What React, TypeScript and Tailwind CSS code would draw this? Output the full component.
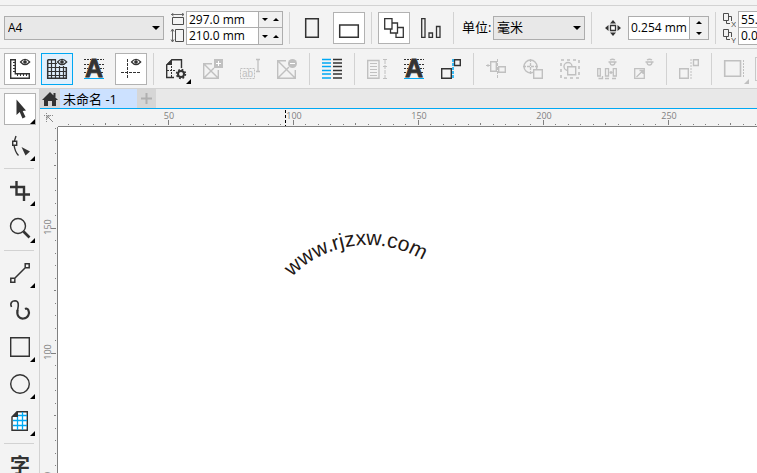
import React from 'react';

const DARK = '#333333';
const DIM = '#c0c0c0';
const BLUE = '#00a8f3';

type IconProps = { children: React.ReactNode; color?: string };

function Icon({ children, color = DARK }: IconProps) {
  return (
    <svg width="20" height="20" viewBox="0 0 20 20" fill="none" stroke={color} className="shrink-0 overflow-visible" aria-hidden="true">
      {children}
    </svg>
  );
}

function Eye({ color = DARK }: { color?: string }) {
  return (
    <g stroke={color}>
      <path d="M10.5 3Q15 -2.4 19.7 3Q15 8.2 10.5 3Z" strokeWidth="1.2" />
      <circle cx="15" cy="3" r="1.3" fill={color} />
    </g>
  );
}

function BaselineA() {
  return (
    <Icon>
      <path d="M0 .5H7M13 .5H20M0 5.500H5M15 5.500H20M0 9.500H4M16 9.500H20M0 13.500H3M17 13.500H20" strokeDasharray="2 1" />
      <text x="10" y="18" textAnchor="middle" fontSize="25" fontWeight="700" fontFamily="Liberation Sans, Arial, sans-serif" fill={DARK} stroke={DARK} strokeWidth=".8">A</text>
      <path d="M0 19.500H20" stroke={BLUE} />
    </Icon>
  );
}

function Flyout({ color = '#000000' }: { color?: string }) {
  return (
    <svg width="5" height="5" viewBox="0 0 5 5" className="absolute bottom-0 right-0" aria-hidden="true">
      <path d="M5 0V5H0Z" fill={color} />
    </svg>
  );
}

type ToolProps = {
  label: string;
  children: React.ReactNode;
  look?: 'plain' | 'boxed' | 'active';
  flyout?: boolean;
  disabled?: boolean;
};

const looks = {
  plain: 'border-transparent',
  boxed: 'border-[#b2b2b2] bg-white',
  active: 'border-[#00a8f3] bg-[#e1f0fd]',
};

function Tool({ label, children, look = 'plain', flyout, disabled }: ToolProps) {
  return (
    <button type="button" aria-label={label} title={label} disabled={disabled}
      className={`relative flex h-8 w-8 shrink-0 items-center justify-center border ${looks[look]}`}>
      {children}
      {flyout && <Flyout color={disabled ? DIM : '#000000'} />}
    </button>
  );
}

function Divider() {
  return (
    <div className="flex h-8 w-[3px] shrink-0 justify-center">
      <div className="w-px bg-[#d2d2d2]" />
    </div>
  );
}

function ToolDivider() {
  return (
    <div className="flex h-[3px] w-[30px] shrink-0 flex-col justify-center">
      <div className="h-px bg-[#d2d2d2]" />
    </div>
  );
}

function Arrow({ up = false, wide = false }: { up?: boolean; wide?: boolean }) {
  return (
    <svg width={wide ? 8 : 6} height={wide ? 4 : 3} viewBox="0 0 8 4" className="shrink-0" aria-hidden="true">
      <path d={up ? 'M0 4L4 0L8 4Z' : 'M0 0L4 4L8 0Z'} fill="#000000" />
    </svg>
  );
}

function Select({ label, value, className }: { label: string; value: string; className: string }) {
  return (
    <div className={`relative h-6 shrink-0 ${className}`}>
      <select aria-label={label} defaultValue={value} className="h-full w-full appearance-none border border-[#adadad] bg-[#e8e8e8] px-[3px] outline-none">
        <option>{value}</option>
      </select>
      <span className="pointer-events-none absolute inset-y-0 right-1 flex items-center"><Arrow wide /></span>
    </div>
  );
}

function SizeRow({ label, value }: { label: string; value: string }) {
  return (
    <div className="flex h-4">
      <input aria-label={label} defaultValue={value} className="w-[71px] bg-white pl-0.5 outline-none" />
      <div className="flex w-6 items-center justify-around border-l border-[#adadad] bg-[#f0f0f0]">
        <button type="button" aria-label={`${label} down`}><Arrow /></button>
        <button type="button" aria-label={`${label} up`}><Arrow up /></button>
      </div>
    </div>
  );
}

function PropertyBar() {
  return (
    <div className="flex h-11 shrink-0 items-center gap-[5px] overflow-hidden border-y border-[#d2d2d2] pl-1 pt-0.5">
      <Select label="Page size" value="A4" className="w-40" />
      <div className="flex shrink-0 items-center gap-px">
        <svg width="16" height="30" viewBox="0 0 16 30" fill="none" stroke="#4d4d4d" className="shrink-0" aria-hidden="true">
          <path d="M3.5 4.5H14.5V11.5H3.5Z" />
          <path d="M2 1.5H15M4.500 0L2.500 1.500L4.500 3M13 0L15 1.500L13 3" stroke="#666666" />
          <path d="M6.500 16.500H14.500V28.500H6.500Z" />
          <path d="M3.500 16V29M2 18.500L3.500 16L5 18.500M2 26.500L3.500 29L5 26.500" stroke="#666666" />
        </svg>
        <div className="w-[97px] divide-y divide-[#adadad] border border-[#adadad]">
          <SizeRow label="Page width" value="297.0 mm" />
          <SizeRow label="Page height" value="210.0 mm" />
        </div>
      </div>
      <Divider />
      <Tool label="Portrait">
        <Icon><path d="M3.700.7H16.300V19.300H3.700Z" strokeWidth="1.500" /></Icon>
      </Tool>
      <Tool label="Landscape" look="boxed">
        <Icon><path d="M.7 7H19.300V19.300H.7Z" strokeWidth="1.500" /></Icon>
      </Tool>
      <Divider />
      <Tool label="All pages" look="boxed">
        <Icon>
          <g fill="#ffffff" strokeWidth="1.3">
            <path d="M12 9.500H19.300V19.300H12Z" />
            <path d="M6.500 5H13.500V15H6.500Z" />
            <path d="M.7.700H8V11H.7Z" />
          </g>
        </Icon>
      </Tool>
      <Tool label="Current page">
        <Icon><path d="M.7.700H4V19.300H.7ZM8 15H11.500V19.300H8ZM15.500 8.500H19V19.300H15.500Z" strokeWidth="1.3" /></Icon>
      </Tool>
      <Divider />
      <div className="flex shrink-0 items-center">
        <span className="w-[33px] whitespace-nowrap pl-0.5 text-[13px]">单位:</span>
        <Select label="单位" value="毫米" className="w-[92px] text-[13px]" />
      </div>
      <Divider />
      <div className="flex shrink-0 items-center">
        <div className="flex w-[30px] justify-center">
          <svg width="16" height="16" viewBox="0 0 16 16" aria-hidden="true">
            <path d="M5.500 5.500H10.500V10.500H5.500Z" fill="#ffffff" stroke={DARK} strokeWidth="1.300" />
            <path d="M8 0L11 3.500H5ZM8 16L5 12.500H11ZM0 8L3.500 5V11ZM16 8L12.500 11V5Z" fill={DARK} />
          </svg>
        </div>
        <div className="flex h-6 w-[81px] border border-[#adadad]">
          <input aria-label="Nudge distance" defaultValue="0.254 mm" className="min-w-0 flex-1 bg-white pl-0.5 outline-none" />
          <div className="flex w-[19px] flex-col items-center justify-around border-l border-[#adadad] bg-[#f0f0f0]">
            <button type="button" aria-label="Nudge up" className="flex"><Arrow up /></button>
            <button type="button" aria-label="Nudge down" className="flex"><Arrow /></button>
          </div>
        </div>
      </div>
      <Divider />
      <div className="flex shrink-0 items-center gap-0.5">
        <svg width="14" height="32" viewBox="0 0 14 32" fill="none" stroke="#4d4d4d" aria-hidden="true">
          <path d="M1.500 1.500H6.500V8.500H1.500ZM6.500 4.500H9.500V9M4.500 8.500V11.500H8" />
          <path d="M1.500 17.500H6.500V24.500H1.500ZM6.500 20.500H9.500V25M4.500 24.500V27.500H8" />
          <g fill="#4d4d4d" stroke="none" fontSize="8" fontFamily="Liberation Sans, Arial, sans-serif">
            <text x="9" y="15">X</text>
            <text x="9" y="31">Y</text>
          </g>
        </svg>
        <div className="w-[97px] divide-y divide-[#adadad] border border-[#adadad]">
          <SizeRow label="Duplicate X" value="55.0 mm" />
          <SizeRow label="Duplicate Y" value="0.0 mm" />
        </div>
      </div>
    </div>
  );
}

function StandardBar() {
  return (
    <div className="flex h-10 shrink-0 items-center gap-[5px] overflow-hidden border-b border-[#d2d2d2] pl-1 pt-px">
      <Tool label="Rulers" look="boxed">
        <Icon>
          <path d="M.7.700H5.300V14.700H19.300V19.300H.7Z" strokeWidth="1.4" />
          <path d="M3 3.500H5M3 6.500H5M3 9.500H5M3 12.500H5M7.500 15V17M10.500 15V17M13.500 15V17M16.500 15V17" />
          <Eye />
        </Icon>
      </Tool>
      <Tool label="Grid" look="active">
        <Icon>
          <path d="M.7.700V19.300H19.300V8M.7.700H9" strokeWidth="1.5" />
          <path d="M4.500 0V20M8.500 0V20M12.500 7V20M16.500 7V20M0 4.500H10M0 8.500H20M0 12.500H20M0 16.500H20" strokeWidth="1.200" />
          <Eye />
        </Icon>
      </Tool>
      <Tool label="Baseline grid"><BaselineA /></Tool>
      <Tool label="Guidelines" look="boxed">
        <Icon>
          <path d="M6.500 0V20M0 13.500H20" strokeDasharray="3 1" />
          <Eye />
        </Icon>
      </Tool>
      <Divider />
      <Tool label="Page setup" flyout>
        <Icon>
          <path d="M15.500 9V.7H6L.7 6V18.500H8" strokeWidth="1.400" />
          <path d="M6 0V6H0Z" fill={DARK} stroke="none" />
          <path d="M5.500 7V18M1 11.500H10" strokeDasharray="2 1" />
          <circle cx="15" cy="15" r="3" strokeWidth="2" />
          <circle cx="15" cy="15" r="4.400" strokeWidth="1.600" strokeDasharray="1.730 1.730" />
        </Icon>
      </Tool>
      <Tool label="Insert frame" disabled>
        <Icon color={DIM}>
          <path d="M9 4.700H.7V19.300H15.300V11M.7 4.700L15.300 19.300M.7 19.300L11 9" strokeWidth="1.400" />
          <path d="M11 0H20V9H11Z" fill={DIM} stroke="none" />
          <path d="M15.500 2V7M13 4.500H18" stroke="#ffffff" />
        </Icon>
      </Tool>
      <Tool label="Fit text" disabled>
        <Icon color={DIM}>
          <path d="M.5 9.500H14.500V19.500H.5Z" strokeDasharray="2 1" />
          <text x="2" y="18" fontSize="10" fontFamily="Liberation Sans, Arial, sans-serif" fill={DIM} stroke="none">ab</text>
          <path d="M18 .7V12M16 .5H20M16 12.500H20" strokeWidth="1.300" />
        </Icon>
      </Tool>
      <Tool label="Remove frame" disabled>
        <Icon color={DIM}>
          <path d="M9 1.700H.7V19.300H18.300V11M.7 1.700L18.300 19.300M.7 19.300L12 8" strokeWidth="1.400" />
          <circle cx="15.500" cy="4.500" r="4.500" fill={DIM} stroke="none" />
          <path d="M13 4.500H18" stroke="#ffffff" />
        </Icon>
      </Tool>
      <Divider />
      <Tool label="Columns">
        <Icon>
          <path d="M0 .5H9M0 4H9M0 7.500H9M0 11.500H9M0 15H9M0 19H9" stroke={BLUE} strokeWidth="1.600" />
          <path d="M11 .5H20M11 4H20M11 7.500H20M11 11.500H20M11 15H20M11 19H20" strokeWidth="1.600" />
        </Icon>
      </Tool>
      <Divider />
      <Tool label="Column text" disabled>
        <Icon color={DIM}>
          <path d="M.7 1.500H12V19.300H.7Z" strokeWidth="1.400" />
          <path d="M3 4.500H10M3 7.500H10M3 10.500H10M3 13.500H10M3 16.500H10" />
          <path d="M18 1V20" strokeDasharray="4 1" />
          <path d="M16 .5H20M16 7.500H20M16 19.500H20" />
        </Icon>
      </Tool>
      <Tool label="Align to baseline"><BaselineA /></Tool>
      <Tool label="Snap to objects">
        <Icon>
          <path d="M.7 9.700H10.300V19.300H.7ZM13.500.7H19.300V6.500H13.500Z" strokeWidth="1.400" />
          <path d="M12 0V20" stroke={BLUE} strokeWidth="1.500" strokeDasharray="3 1" />
        </Icon>
      </Tool>
      <Divider />
      <Tool label="Align centers" disabled>
        <Icon color={DIM}>
          <path d="M4.700 2.700H10.300V12.300H4.700ZM12.700 7.700H19.300V13.300H12.700Z" strokeWidth="1.400" />
          <path d="M11.500 0V20" strokeDasharray="3 1" />
          <path d="M0 6.500H4M2 5V8" />
        </Icon>
      </Tool>
      <Tool label="Center snap" disabled>
        <Icon color={DIM}>
          <circle cx="7.500" cy="7.500" r="6.500" strokeWidth="1.400" />
          <path d="M7.500 0V15M0 7.500H15" strokeWidth="1.300" strokeDasharray="3 1" />
          <path d="M10.700 10.700H19.300V19.300H10.700Z" strokeWidth="1.400" fill="#f3f3f3" />
        </Icon>
      </Tool>
      <Tool label="Group snap" disabled>
        <Icon color={DIM}>
          <path d="M1 1H19V19H1Z" strokeWidth="1.600" strokeDasharray="3 3" />
          <circle cx="8" cy="7.500" r="4" strokeWidth="1.400" />
          <path d="M7.700 7.700H15.700V15.700H7.700Z" strokeWidth="1.400" fill="#f3f3f3" />
        </Icon>
      </Tool>
      <Tool label="Spacing" disabled>
        <Icon color={DIM}>
          <path d="M.7 9.700H3.300V17H.7ZM8.500 9.700H11.500V17H8.500ZM16.300 9.700H19.300V17H16.300ZM12.500 13.500H15.500M14 12V15M1.500 19.500H5.500V17M8 19.500H12M15 19.500H19" strokeWidth="1.300" />
          <path d="M11.500 3H19.500M13 1Q15.500 -.5 18 1M13 3Q13 6 15.500 6Q18 6 18 3" strokeWidth="1.300" />
        </Icon>
      </Tool>
      <Tool label="Scale" disabled>
        <Icon color={DIM}>
          <path d="M.7 9.700H10.300V19.300H.7ZM2.500 18L9 11.500M5.500 11.500H9V15" strokeWidth="1.300" />
          <path d="M11.500 3H19.500M13 1Q15.500 -.5 18 1M13 3Q13 6 15.500 6Q18 6 18 3" strokeWidth="1.300" />
        </Icon>
      </Tool>
      <Divider />
      <Tool label="Edge snap" disabled>
        <Icon color={DIM}>
          <path d="M.7 9.700H9.300V19.300H.7ZM14.500.7H19.300V6.500H14.500Z" strokeWidth="1.400" />
          <path d="M12 0V20" strokeDasharray="2 1" />
        </Icon>
      </Tool>
      <Divider />
      <Tool label="Page edge" flyout disabled>
        <Icon color={DIM}>
          <path d="M.7 1.700H16.500V17.300H.7Z" strokeWidth="1.600" />
          <path d="M19.500 1V19" strokeDasharray="2 1" />
        </Icon>
      </Tool>
      <div className="h-6 w-8 shrink-0 border border-[#c8c8c8]" />
    </div>
  );
}

function Toolbox() {
  return (
    <nav aria-label="Toolbox" className="flex w-10 shrink-0 flex-col gap-[5px] overflow-hidden border-r border-[#d2d2d2] px-1 pt-1">
      <Tool label="Pick" look="boxed" flyout>
        <Icon><path d="M6.500.5V16L9.700 13L12.500 19.500L15.500 18L12.700 12L16 11.500Z" fill={DARK} stroke="none" /></Icon>
      </Tool>
      <Tool label="Shape" flyout>
        <Icon>
          <path d="M6 0Q4 5 4 9Q5 16 8.500 19.500" strokeWidth="1.400" />
          <path d="M2.700 5.200H6.700V9.200H2.700Z" fill="#f3f3f3" strokeWidth="1.400" />
          <path d="M11.500 11L20 15.500L15.500 19.500Z" fill={DARK} stroke="none" />
        </Icon>
      </Tool>
      <ToolDivider />
      <Tool label="Crop" flyout>
        <Icon><path d="M0 6H14V20M6.500 0V13.500H20" strokeWidth="2.400" /></Icon>
      </Tool>
      <Tool label="Zoom" flyout>
        <Icon>
          <circle cx="8" cy="8" r="7.500" strokeWidth="1.400" />
          <path d="M13.500 13.500L19.500 19.500" strokeWidth="2.600" />
        </Icon>
      </Tool>
      <ToolDivider />
      <Tool label="Freehand" flyout>
        <Icon><path d="M4 16L16 4M.8 15.200H4.800V19.200H.8ZM15.200.8H19.200V4.800H15.200Z" strokeWidth="1.500" /></Icon>
      </Tool>
      <Tool label="Artistic media">
        <Icon>
          <path d="M1.500 7C-.5 3 2.500 .7 5 .7C10 1 8 7 7.500 11" strokeWidth="1.600" />
          <path d="M7.500 10C6.500 16 9.500 19 13.500 18.500C18 18 20 13.500 18.500 10.500C17.700 8.500 16 8.500 15 9" strokeWidth="2.200" />
        </Icon>
      </Tool>
      <Tool label="Rectangle" flyout>
        <Icon><path d="M.7.700H19.300V19.300H.7Z" strokeWidth="1.400" /></Icon>
      </Tool>
      <Tool label="Ellipse" flyout>
        <Icon><circle cx="10" cy="10" r="9.300" strokeWidth="1.400" /></Icon>
      </Tool>
      <Tool label="Graph paper" flyout>
        <Icon>
          <path d="M7 .7H17.300V19.300H2V6Z" fill="#ffffff" strokeWidth="1.400" />
          <path d="M7.500 6V19M12.500 1V19M8 4.500H17M3 9.500H17M3 14.500H17" stroke={BLUE} strokeWidth="1.300" />
          <path d="M8 0V6H1.500Z" fill={DARK} stroke="none" />
        </Icon>
      </Tool>
      <ToolDivider />
      <Tool label="Text">
        <span className="text-[20px] font-bold leading-5 text-[#333333]">字</span>
      </Tool>
    </nav>
  );
}

function Tabs() {
  return (
    <div className="flex h-5 shrink-0 items-stretch border-b border-[#00a8f3] bg-[#e8e8e8]">
      <button type="button" aria-label="Home" className="flex w-5 items-center justify-center bg-[#d6d6d6]">
        <svg width="16" height="14" viewBox="0 0 16 14" className="shrink-0" aria-hidden="true">
          <path d="M8 0L16 8H14V14H10V9H6V14H2V8H0ZM11.500 1H13.500V5H11.500Z" fill={DARK} />
        </svg>
      </button>
      <button type="button" className="w-[77px] whitespace-nowrap bg-[#cce1ff] pl-[3px] text-left text-[13px] leading-[18px]">未命名 -1</button>
      <button type="button" aria-label="New document" className="flex w-[19px] items-center justify-center bg-[#d6d6d6]">
        <svg width="11" height="11" viewBox="0 0 11 11" aria-hidden="true">
          <path d="M5.500 0V11M0 5.500H11" stroke="#b0b0b0" strokeWidth="2" />
        </svg>
      </button>
    </div>
  );
}

// 12.5px for every 5 mm, ticks grow at each 25 and 50 mm
const rulerWidth = window.innerWidth - 58;
const ticks = Array.from({ length: Math.ceil(rulerWidth / 12.5) + 1 }, (_, i) => i + 2);

function tickLength(i: number) {
  if (i % 10 === 0) return 5;
  return i % 5 === 0 ? 2 : 1;
}

function HorizontalRuler() {
  const labels = ticks.filter((i) => i % 10 === 0 && i * 12.5 < rulerWidth);
  return (
    <svg height="18" className="min-w-0 flex-1" aria-label="Horizontal ruler">
      {ticks.map((i) => (
        <rect key={i} x={Math.floor(i * 12.5 - 15)} y={16 - tickLength(i)} width="1" height={tickLength(i)} fill="#808080" />
      ))}
      <g fontSize="9" fill="#808080" textAnchor="middle">
        {labels.map((i) => (
          <text key={i} x={i * 12.5 - 14} y="10">{i * 5}</text>
        ))}
      </g>
      <path d="M227.500 1V17" stroke="#000000" strokeDasharray="3 2" />
      <path d="M0 17.500H4000" stroke="#808080" />
    </svg>
  );
}

const sideTicks = Array.from({ length: 100 }, (_, i) => i);

function VerticalRuler() {
  return (
    <svg width="18" className="h-full shrink-0" aria-label="Vertical ruler">
      {sideTicks.map((i) => (
        <rect key={i} x={16 - tickLength(i + 2)} y={Math.floor(i * 12.5 + 1)} width={tickLength(i + 2)} height="1" fill="#808080" />
      ))}
      <g fontSize="9" fill="#808080" textAnchor="middle">
        {[150, 100, 50].map((mm, n) => (
          <text key={mm} transform={`translate(11 ${100 + n * 125}) rotate(-90)`}>{mm}</text>
        ))}
      </g>
      <path d="M17.500 0V4000" stroke="#808080" />
    </svg>
  );
}

function Canvas() {
  return (
    <svg className="h-full min-w-0 flex-1 bg-white" aria-label="Drawing page">
      <defs>
        <path id="curve" d="M203 225A107 107 0 0 1 417 225" />
      </defs>
      <text fontSize="21" fontFamily="Liberation Sans, Arial, sans-serif" fill="#231815" textAnchor="middle">
        <textPath href="#curve" startOffset="46%">www.rjzxw.com</textPath>
      </text>
    </svg>
  );
}

export default function App() {
  return (
    <div className="flex h-screen flex-col overflow-hidden bg-[#f3f3f3] font-['Open_Sans','Noto_Sans_CJK_SC',sans-serif] text-[12px] text-black">
      <div className="h-[5px] shrink-0" />
      <PropertyBar />
      <StandardBar />
      <div className="flex min-h-0 flex-1">
        <Toolbox />
        <main className="flex min-w-0 flex-1 flex-col">
          <Tabs />
          <div className="flex h-[18px] shrink-0">
            <svg width="18" height="18" viewBox="0 0 18 18" fill="none" stroke="#8a8a8a" className="shrink-0" aria-hidden="true">
              <path d="M4 6.500H14M6.500 4V14" strokeDasharray="1 1" />
              <path d="M7 7L13 13M7 10V7H10" />
            </svg>
            <HorizontalRuler />
          </div>
          <div className="flex min-h-0 flex-1">
            <VerticalRuler />
            <Canvas />
          </div>
        </main>
      </div>
    </div>
  );
}
